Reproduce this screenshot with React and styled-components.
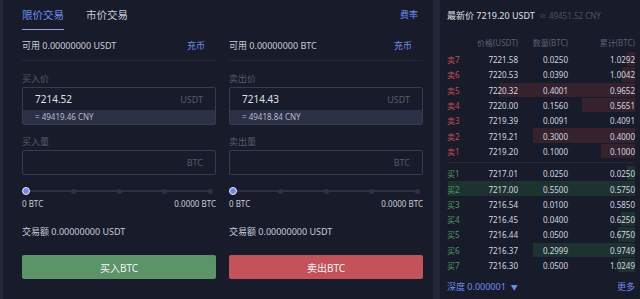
import React from 'react';
import styled, { createGlobalStyle } from 'styled-components';

const GlobalStyle = createGlobalStyle`
  body {
    margin: 0;
    background: #23273a;
    font-family: "Noto Sans", "Noto Sans CJK SC", sans-serif;
    color: #c9cdd9;
  }
`;

const Page = styled.div`
  display: grid;
  grid-template-columns: 430px 200px;
  column-gap: 7px;
  padding-left: 3px;
  height: 299px;
  overflow: hidden;
`;

const LeftPanel = styled.div`
  background: #181b29;
  padding: 0 11px 0 19px;
  display: flex;
  flex-direction: column;
`;

const TabsBar = styled.div`
  display: flex;
  align-items: flex-start;
  justify-content: space-between;
  height: 30px;
`;

const Tabs = styled.div`
  display: flex;
  gap: 22px;
`;

const Tab = styled.div`
  font-size: 10.5px;
  line-height: 14px;
  padding: 8px 0 7px;
  color: ${(p) => (p.$active ? '#6d8cf2' : '#c9cdd9')};
  border-bottom: 1px solid ${(p) => (p.$active ? '#8fa0da' : 'transparent')};
`;

const Link = styled.span`
  color: #6d8cf2;
  font-size: 9px;
`;

const FeeLink = styled(Link)`
  line-height: 14px;
  padding-top: 8px;
  margin-right: 4px;
`;

const Columns = styled.div`
  display: grid;
  grid-template-columns: 194px 194px;
  column-gap: 13px;
`;

const Column = styled.div`
  display: flex;
  flex-direction: column;
`;

const BalanceRow = styled.div`
  height: 30px;
  display: flex;
  align-items: center;
  justify-content: space-between;
  padding-right: 11px;
  border-bottom: 1px solid #242839;
  font-size: 9px;
  color: #c9cdd9;
`;

const FieldLabel = styled.div`
  font-size: 9px;
  line-height: 12px;
  color: #565b6f;
  margin: ${(p) => p.$top || 12}px 0 2px;
`;

const InputBox = styled.div`
  border: 1px solid #363b50;
  border-radius: 2px;
  display: flex;
  flex-direction: column;
`;

const InputMain = styled.div`
  height: ${(p) => p.$h}px;
  display: flex;
  align-items: center;
  justify-content: space-between;
  padding: 0 12px;
`;

const InputValue = styled.span`
  font-size: 10px;
  color: #dfe2ea;
`;

const Unit = styled.span`
  font-size: 9px;
  color: #575c70;
`;

const CnyStrip = styled.div`
  height: 14px;
  background: #2b3047;
  font-size: 8px;
  line-height: 14px;
  padding-left: 12px;
  color: #b7bccd;
`;

const Slider = styled.div`
  position: relative;
  margin: 12px 3px 0 0;
  height: 8px;
  display: flex;
  align-items: center;
  justify-content: space-between;
`;

const Track = styled.div`
  position: absolute;
  left: 4px;
  right: 1px;
  top: 3px;
  height: 2px;
  background: #2c3043;
`;

const Tick = styled.div`
  position: relative;
  width: 5px;
  height: 5px;
  border-radius: 50%;
  background: #2f3346;
`;

const Knob = styled.div`
  position: relative;
  width: 6px;
  height: 6px;
  border-radius: 50%;
  background: #7486e6;
  border: 1px solid #e9ecf7;
`;

const SliderLabels = styled.div`
  display: flex;
  justify-content: space-between;
  font-size: 8px;
  line-height: 10px;
  margin-top: 4px;
  color: #c9cdd9;
`;

const Amount = styled.div`
  margin-top: 17px;
  font-size: 9px;
  line-height: 12px;
  color: #c9cdd9;
`;

const ActionButton = styled.button`
  margin-top: 17px;
  height: 24px;
  border: none;
  border-radius: 2px;
  font-family: inherit;
  font-size: 10px;
  color: #f2f2f2;
  background: ${(p) => (p.$side === 'buy' ? '#5a9468' : '#c3525a')};
`;

const RightPanel = styled.div`
  background: #181b29;
  padding: 0 5px 0 7px;
  display: flex;
  flex-direction: column;
`;

const LatestRow = styled.div`
  height: 30px;
  display: flex;
  align-items: center;
  gap: 4px;
  font-size: 9px;
  color: #dfe2ea;
`;

const Approx = styled.span`
  font-size: 8px;
  color: #4e5367;
`;

const GridRow = styled.div`
  position: relative;
  display: grid;
  grid-template-columns: 26px 45px 50px 67px;
  align-items: center;
  height: ${(p) => p.$h || 15.3}px;
  font-size: 8px;
  color: #d3d6e0;
  white-space: nowrap;
  & > span {
    position: relative;
  }
  & > span:not(:first-of-type) {
    text-align: right;
  }
`;

const HeaderRow = styled(GridRow)`
  margin-top: 5px;
  margin-bottom: 3px;
  color: #5a5f73;
`;

const SideLabel = styled.span`
  color: ${(p) => (p.$side === 'buy' ? '#4f9a66' : '#c24c55')};
`;

const DepthBar = styled.div`
  position: absolute;
  right: 0;
  top: 0;
  bottom: 1px;
  background: ${(p) => (p.$side === 'buy' ? '#1e3330' : '#36222d')};
`;

const Divider = styled.div`
  margin: 3px 0;
  border-top: 1px solid #262a3b;
`;

const Footer = styled.div`
  flex: 1;
  display: flex;
  align-items: center;
  justify-content: space-between;
  font-size: 9px;
  color: #6d8cf2;
`;

const Caret = styled.span`
  font-size: 7px;
  margin-left: 5px;
`;

const asks = [
  ['卖7', '7221.58', '0.0250', '1.0292'],
  ['卖6', '7220.53', '0.0390', '1.0042'],
  ['卖5', '7220.32', '0.4001', '0.9652'],
  ['卖4', '7220.00', '0.1560', '0.5651'],
  ['卖3', '7219.39', '0.0091', '0.4091'],
  ['卖2', '7219.21', '0.3000', '0.4000'],
  ['卖1', '7219.20', '0.1000', '0.1000'],
];

const bids = [
  ['买1', '7217.01', '0.0250', '0.0250'],
  ['买2', '7217.00', '0.5500', '0.5750'],
  ['买3', '7216.54', '0.0100', '0.5850'],
  ['买4', '7216.45', '0.0400', '0.6250'],
  ['买5', '7216.44', '0.0500', '0.6750'],
  ['买6', '7216.37', '0.2999', '0.9749'],
  ['买7', '7216.30', '0.0500', '1.0249'],
];

const OrderRow = ({ side, row }) => {
  const [label, price, qty, total] = row;
  const width = Math.min(parseFloat(qty) * 340, 188);
  return (
    <GridRow>
      {width > 6 && <DepthBar $side={side} style={{ width }} />}
      <SideLabel $side={side}>{label}</SideLabel>
      <span>{price}</span>
      <span>{qty}</span>
      <span>{total}</span>
    </GridRow>
  );
};

const TradeColumn = ({ side, asset, priceLabel, price, cny, qtyLabel, button }) => (
  <Column>
    <BalanceRow>
      <span>可用 0.00000000 {asset}</span>
      <Link>充币</Link>
    </BalanceRow>
    <FieldLabel>{priceLabel}</FieldLabel>
    <InputBox>
      <InputMain $h={22}>
        <InputValue>{price}</InputValue>
        <Unit>USDT</Unit>
      </InputMain>
      <CnyStrip>= {cny} CNY</CnyStrip>
    </InputBox>
    <FieldLabel $top={11}>{qtyLabel}</FieldLabel>
    <InputBox>
      <InputMain $h={23}>
        <span />
        <Unit>BTC</Unit>
      </InputMain>
    </InputBox>
    <Slider>
      <Track />
      <Knob />
      <Tick />
      <Tick />
      <Tick />
      <Tick />
    </Slider>
    <SliderLabels>
      <span>0 BTC</span>
      <span>0.0000 BTC</span>
    </SliderLabels>
    <Amount>交易额 0.00000000 USDT</Amount>
    <ActionButton $side={side}>{button}</ActionButton>
  </Column>
);

export default function App() {
  return (
    <>
      <GlobalStyle />
      <Page>
        <LeftPanel>
          <TabsBar>
            <Tabs>
              <Tab $active>限价交易</Tab>
              <Tab>市价交易</Tab>
            </Tabs>
            <FeeLink>费率</FeeLink>
          </TabsBar>
          <Columns>
            <TradeColumn
              side="buy"
              asset="USDT"
              priceLabel="买入价"
              price="7214.52"
              cny="49419.46"
              qtyLabel="买入量"
              button="买入BTC"
            />
            <TradeColumn
              side="sell"
              asset="BTC"
              priceLabel="卖出价"
              price="7214.43"
              cny="49418.84"
              qtyLabel="卖出量"
              button="卖出BTC"
            />
          </Columns>
        </LeftPanel>
        <RightPanel>
          <LatestRow>
            <span>最新价 7219.20 USDT</span>
            <Approx>≈ 49451.52 CNY</Approx>
          </LatestRow>
          <HeaderRow $h={14}>
            <span />
            <span>价格(USDT)</span>
            <span>数量(BTC)</span>
            <span>累计(BTC)</span>
          </HeaderRow>
          {asks.map((row) => (
            <OrderRow key={row[0]} side="sell" row={row} />
          ))}
          <Divider />
          {bids.map((row) => (
            <OrderRow key={row[0]} side="buy" row={row} />
          ))}
          <Footer>
            <span>
              深度 0.000001<Caret>▼</Caret>
            </span>
            <span>更多</span>
          </Footer>
        </RightPanel>
      </Page>
    </>
  );
}
